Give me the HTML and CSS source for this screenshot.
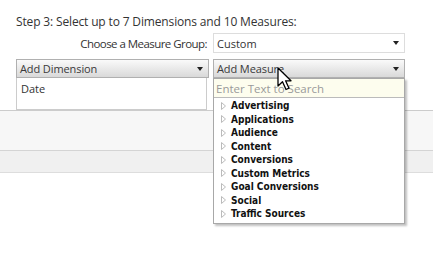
FILE: index.html
```html
<!DOCTYPE html>
<html lang="en">
<head>
    <meta charset="UTF-8">
    <title>Select Dimensions and Measures</title>
    <link rel="stylesheet" href="styles.css">
</head>
<body>
    <div class="step">Step 3: Select up to 7 Dimensions and 10 Measures:</div>

    <!-- Measure group -->
    <div class="group-row">
        <span class="group-label">Choose a Measure Group:</span>
        <div class="select">
            <span>Custom</span>
            <span class="arrow"></span>
        </div>
    </div>

    <!-- Dimension / measure pickers -->
    <div class="pickers">
        <div class="picker">
            <div class="bar">
                <span>Add Dimension</span>
                <span class="arrow"></span>
            </div>
            <div class="chosen">
                <div class="chosen-item">Date</div>
            </div>
        </div>
        <div class="picker measure">
            <div class="bar">
                <span>Add Measure</span>
                <span class="arrow"></span>
            </div>

            <!-- Open measure menu -->
            <div class="menu">
                <input class="search" type="text" placeholder="Enter Text to Search">
                <ul class="tree">
                    <li><svg class="caret" width="5" height="8" viewBox="0 0 5 8"><path d="M0.5 0.5 L4.5 4 L0.5 7.5 Z" fill="#fff" stroke="#bbb" stroke-width="1"/></svg>Advertising</li>
                    <li><svg class="caret" width="5" height="8" viewBox="0 0 5 8"><path d="M0.5 0.5 L4.5 4 L0.5 7.5 Z" fill="#fff" stroke="#bbb" stroke-width="1"/></svg>Applications</li>
                    <li><svg class="caret" width="5" height="8" viewBox="0 0 5 8"><path d="M0.5 0.5 L4.5 4 L0.5 7.5 Z" fill="#fff" stroke="#bbb" stroke-width="1"/></svg>Audience</li>
                    <li><svg class="caret" width="5" height="8" viewBox="0 0 5 8"><path d="M0.5 0.5 L4.5 4 L0.5 7.5 Z" fill="#fff" stroke="#bbb" stroke-width="1"/></svg>Content</li>
                    <li><svg class="caret" width="5" height="8" viewBox="0 0 5 8"><path d="M0.5 0.5 L4.5 4 L0.5 7.5 Z" fill="#fff" stroke="#bbb" stroke-width="1"/></svg>Conversions</li>
                    <li><svg class="caret" width="5" height="8" viewBox="0 0 5 8"><path d="M0.5 0.5 L4.5 4 L0.5 7.5 Z" fill="#fff" stroke="#bbb" stroke-width="1"/></svg>Custom Metrics</li>
                    <li><svg class="caret" width="5" height="8" viewBox="0 0 5 8"><path d="M0.5 0.5 L4.5 4 L0.5 7.5 Z" fill="#fff" stroke="#bbb" stroke-width="1"/></svg>Goal Conversions</li>
                    <li><svg class="caret" width="5" height="8" viewBox="0 0 5 8"><path d="M0.5 0.5 L4.5 4 L0.5 7.5 Z" fill="#fff" stroke="#bbb" stroke-width="1"/></svg>Social</li>
                    <li><svg class="caret" width="5" height="8" viewBox="0 0 5 8"><path d="M0.5 0.5 L4.5 4 L0.5 7.5 Z" fill="#fff" stroke="#bbb" stroke-width="1"/></svg>Traffic Sources</li>
                </ul>
            </div>

            <svg class="cursor" width="17" height="25" viewBox="0 0 17 25">
                <path d="M1 1 L1 19 L5.5 14.8 L9 22.5 L12 21.2 L8.6 13.8 L14 13.8 Z" fill="#fff" stroke="#000" stroke-width="1.3" stroke-linejoin="round"/>
            </svg>
        </div>
    </div>

    <div class="band"></div>
    <div class="band-lower"></div>
</body>
</html>
```

FILE: styles.css
```css
body {
    margin: 0;
    min-height: 272px;
    font-family: "Open Sans", "Noto Sans", sans-serif;
    font-size: 12px;
    color: #333;
    background-color: #fff;
}
.step {
    padding: 13px 0 0 16px;
    height: 19px;
    letter-spacing: -0.15px;
}
.group-row {
    display: flex;
    justify-content: flex-end;
    align-items: center;
    width: 405px;
    margin-top: 1px;
    gap: 6px;
}
.group-label {
    font-size: 11.5px;
    letter-spacing: -0.55px;
}
.select {
    box-sizing: border-box;
    width: 192px;
    height: 20px;
    border: 1px solid #ddd;
    display: flex;
    align-items: center;
    justify-content: space-between;
    padding: 0 5px 0 3px;
    background-color: #fff;
    font-size: 11px;
}
.arrow {
    width: 0;
    height: 0;
    border-left: 3.5px solid transparent;
    border-right: 3.5px solid transparent;
    border-top: 4px solid #222;
}
.pickers {
    display: flex;
    gap: 4px;
    padding-left: 16px;
    margin-top: 6px;
}
.picker {
    width: 193px;
    position: relative;
}
.picker.measure {
    width: 192px;
}
.bar {
    box-sizing: border-box;
    height: 19px;
    border: 1px solid #b0b0b0;
    background: linear-gradient(#fafafa, #d9d9d9);
    display: flex;
    align-items: center;
    justify-content: space-between;
    padding: 0 5px 0 3px;
    color: #3a3a3a;
    font-size: 11px;
    letter-spacing: -0.1px;
}
.chosen {
    box-sizing: border-box;
    width: 191px;
    height: 32px;
    border: 1px solid #ccc;
    border-top: none;
    padding: 3px 0 0 4px;
    font-size: 11px;
}
.band {
    box-sizing: border-box;
    height: 40px;
    border-top: 1px solid #ccc;
    background-color: #f7f7f7;
}
.band-lower {
    box-sizing: border-box;
    height: 23px;
    border-top: 1px solid #d4d4d4;
    border-bottom: 1px solid #ddd;
    background-color: #f0f0f0;
}
.menu {
    position: absolute;
    top: 19px;
    left: 0;
    width: 192px;
    box-sizing: border-box;
    background-color: #fff;
    border: 1px solid #a8a8a8;
    box-shadow: 2px 2px 2px rgba(0, 0, 0, 0.25);
    z-index: 10;
}
.search {
    display: block;
    box-sizing: border-box;
    width: 100%;
    height: 19px;
    margin: 0;
    border: none;
    border-bottom: 1px solid #bbb;
    background-color: #fdfdee;
    font-family: "Open Sans", "Noto Sans", sans-serif;
    font-size: 11.5px;
    padding: 0 2px;
    outline: none;
}
.search::placeholder {
    color: #9a9a9a;
}
.tree {
    list-style: none;
    margin: 0;
    padding: 1px 0 2px 7px;
}
.tree li {
    height: 13.5px;
    line-height: 13.5px;
    font-family: "DejaVu Sans Condensed", "DejaVu Sans", sans-serif;
    font-weight: bold;
    font-size: 10px;
    color: #111;
    display: flex;
    align-items: center;
}
.caret {
    margin-right: 5px;
    flex-shrink: 0;
}
.cursor {
    position: absolute;
    left: 64px;
    top: 8px;
    z-index: 20;
}
```
